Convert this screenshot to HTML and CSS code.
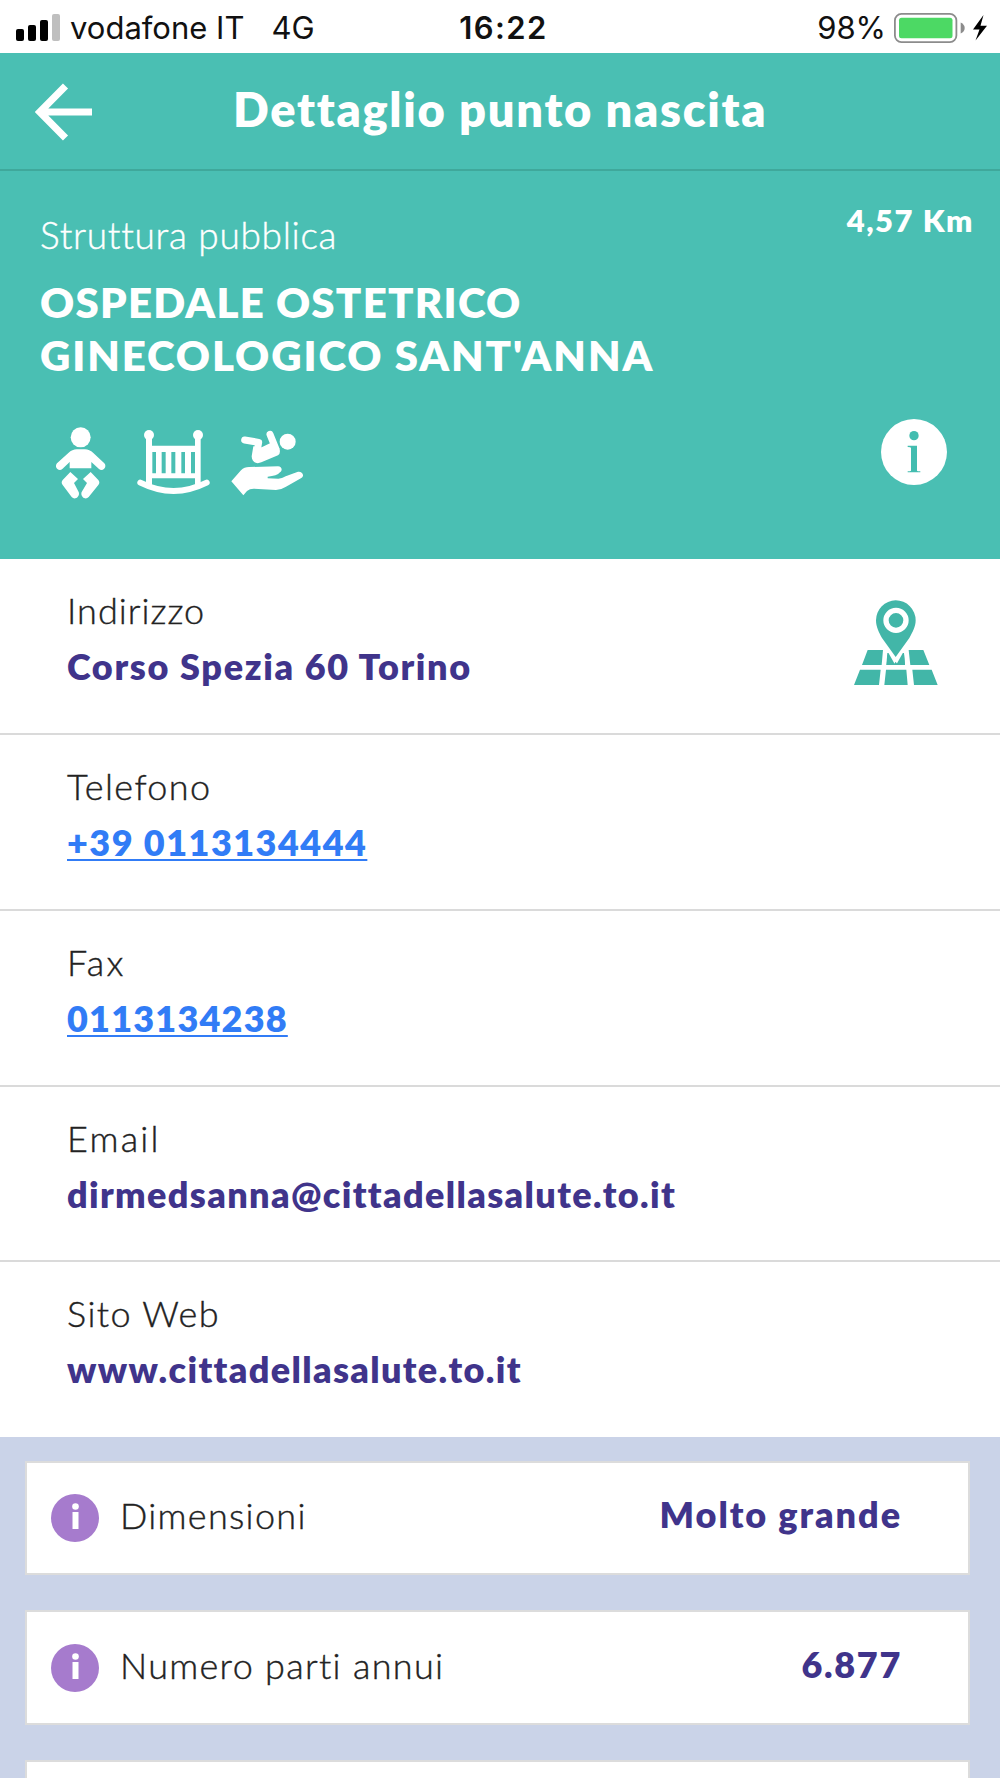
FILE: index.html
```
<!DOCTYPE html>
<html lang="it">
<head>
<meta charset="utf-8">
<title>Dettaglio punto nascita</title>
<link rel="stylesheet" href="styles.css">
</head>
<body>
<div class="screen">
  <div class="status">
    <div class="status-left">
      <svg class="signal" width="44" height="27" viewBox="0 0 44 27">
        <rect x="0" y="15" width="8" height="12" rx="2"/>
        <rect x="12" y="11" width="8" height="16" rx="2"/>
        <rect x="24" y="6" width="8" height="21" rx="2"/>
        <rect x="36" y="0" width="8" height="27" rx="2" fill="#bfbfbf"/>
      </svg>
      <span>vodafone IT</span>
      <span class="network">4G</span>
    </div>
    <div class="clock">16:22</div>
    <div class="status-right">
      <span>98%</span>
      <svg class="battery" width="94" height="30" viewBox="0 0 94 30">
        <rect x=".9" y=".9" width="61.5" height="28.2" rx="6.5" fill="#fff" stroke="#8c8c8c" stroke-width="1.8"/>
        <rect x="5" y="4.7" width="53.5" height="20.6" rx="2.5" fill="#4cd964"/>
        <path d="M66.7 9.500q4 2 4 5.500t-4 5.500z" fill="#8c8c8c"/>
        <path d="M89.500 2 79 16.500h6.500L81.500 27.500 93 12.800h-6.500z"/>
      </svg>
    </div>
  </div>

  <header class="navbar">
    <svg class="back" width="58" height="58" viewBox="0 0 58 58" fill="none" stroke="#fff" stroke-width="7.200">
      <path d="M30.500 3 4.800 29l25.700 26M5 29h52"/>
    </svg>
    <h1>Dettaglio punto nascita</h1>
  </header>

  <section class="hero">
    <div class="hero-main">
      <p class="kind">Struttura pubblica</p>
      <h2><span class="line-one">OSPEDALE OSTETRICO</span><br>GINECOLOGICO SANT'ANNA</h2>
      <div class="services">
        <svg width="50" height="72" viewBox="48 50 150 216" fill="#fff">
          <circle cx="122" cy="81" r="30"/>
          <path d="M89 174v-19l-22 21c-10 9-26-5-16-17l34-31q12-11 25-11h25q13 0 25 11l33 31c10 12-6 26-16 17l-23-21v19z"/>
          <path d="M91 185l23 21-12 12 14 27c5 13-11 26-21 15L68 224q-6-8 0-15zM152 185l-23 21 12 12-16 27c-5 13 11 26 21 15l29-36q6-8 0-15z"/>
        </svg>
        <svg class="cradle" width="73" height="72" viewBox="291 50 219 216" fill="#fff">
          <circle cx="327" cy="74" r="15"/><circle cx="474" cy="74" r="15"/>
          <path d="M318 80h18v26h129V80h17v145h-17v-21H336v21h-18z"/>
          <path d="M337 125h11v64h-11zM365 125h12v64h-12zM394 125h12v64h-12zM424 125h11v64h-11zM453 125h12v64h-12z" fill="#4abfb3"/>
          <path d="M301 217q100 50 199 0" fill="none" stroke="#fff" stroke-width="18" stroke-linecap="round"/>
        </svg>
        <svg class="newborn" width="72" height="72" viewBox="573 50 216 216" fill="#fff">
          <circle cx="743" cy="94" r="24"/>
          <path d="M614 89l42 7-5 28M690 72l17 42" fill="none" stroke="#fff" stroke-width="21" stroke-linecap="round" stroke-linejoin="round"/>
          <path d="M640 108l25 3 28-14 25 16q5 16-4 22l-50 21c-16 7-29-2-29-18z"/>
          <path d="M574 213l29-33q10-10 24-10l87-2c11 0 15 12 6 18q-9 11-37 13v5l32 1q11 0 22-7l35-13c15-4 23 12 12 18l-46 26q-14 9-30 10l-67-4q-12 0-20 7l-11 13z"/>
        </svg>
      </div>
    </div>
    <div class="hero-side">
      <span class="distance">4,57 Km</span>
      <svg class="info" width="66" height="66" viewBox="123 56 198 198" fill="#fff">
        <circle cx="222" cy="155" r="99"/>
        <g fill="#43bdb0"><circle cx="222" cy="106" r="14"/><path d="M203 136h28v75q1 2 10 2v3h-38v-3q9 0 10-2v-67q0-4-10-4z"/></g>
      </svg>
    </div>
  </section>

  <section class="contacts">
    <div class="row">
      <div><p class="label ind">Indirizzo</p><p class="value corso">Corso Spezia 60 Torino</p></div>
      <svg class="map" width="86" height="86" viewBox="70 59 256 258" fill="#42b6a8">
        <path d="M113 209h46l-4 45H96zM236 209h44l18 45h-57zM90 268h62l-5 46H72zM168 268h61l4 46h-70zM247 268h58l18 46h-71z"/>
        <path d="M172 218h50l3 36h-56z"/>
        <path d="M160 190l37 66 37-66z" fill="#fff"/>
        <path d="M173 222l19 32h-22zM222 222l-19 32h22zM190 254l7-10 7 10z"/>
        <path d="M197 60a60 60 0 0 1 60 60c0 20-10 37-19 53l-41 57-41-57c-9-16-18-33-18-53a60 60 0 0 1 59-60z"/>
        <circle cx="198" cy="120" r="30" fill="none" stroke="#fff" stroke-width="16"/>
      </svg>
    </div>
    <div class="row"><div><p class="label">Telefono</p><p class="value"><a class="phone" href="#">+39 0113134444</a></p></div></div>
    <div class="row"><div><p class="label fax">Fax</p><p class="value"><a class="faxno" href="#">0113134238</a></p></div></div>
    <div class="row"><div><p class="label email">Email</p><p class="value mail">dirmedsanna@cittadellasalute.to.it</p></div></div>
    <div class="row"><div><p class="label site">Sito Web</p><p class="value mail">www.cittadellasalute.to.it</p></div></div>
  </section>

  <section class="stats">
    <div class="card">
      <svg width="48" height="48" viewBox="0 0 48 48"><circle cx="24" cy="24" r="24" fill="#a67bcd"/><g fill="#fff"><circle cx="24.500" cy="12.500" r="3.300"/><path d="M21.500 18h6v17h-6z"/></g></svg>
      <span class="name">Dimensioni</span><span class="figure">Molto grande</span>
    </div>
    <div class="card">
      <svg width="48" height="48" viewBox="0 0 48 48"><circle cx="24" cy="24" r="24" fill="#a67bcd"/><g fill="#fff"><circle cx="24.500" cy="12.500" r="3.300"/><path d="M21.500 18h6v17h-6z"/></g></svg>
      <span class="name">Numero parti annui</span><span class="figure num">6.877</span>
    </div>
    <div class="card"></div>
  </section>
</div>
</body>
</html>
```
FILE: styles.css
```
* { box-sizing: border-box; }
body, h1, h2, p { margin: 0; }
body { background: #fff; font-family: Lato, "Open Sans", sans-serif; font-variant-ligatures: none; }
svg { display: block; flex: none; }
.screen { width: 1000px; height: 1778px; overflow: hidden; }

.status {
  height: 53.400px; padding: 2px 12px 0 16px;
  display: grid; grid-template-columns: 1fr auto 1fr; align-items: center;
  font: 400 31px/51px Inter, sans-serif; color: #111;
}
.status-left, .status-right { display: flex; align-items: center; }
.status-right { justify-content: flex-end; }
.signal { margin-right: 10px; }
.network { margin-left: 27px; }
.clock { font-weight: 600; letter-spacing: 1.400px; padding-left: 3px; }
.battery { margin-left: 8px; }

.navbar {
  height: 117.600px; padding-left: 35px; border-bottom: 2px solid #3fa89b; background: #4abfb3;
  display: flex; align-items: center;
}
.back { margin-top: 1px; }
h1 { margin-left: 140px; padding-bottom: 5px; font-size: 47px; font-weight: 800; line-height: 56px; letter-spacing: 1.700px; color: #fff; white-space: nowrap; }

.hero { height: 388.300px; padding: 0 28px 0 40px; display: flex; justify-content: space-between; background: #4abfb3; color: #fff; }
.hero-main { padding-top: 42px; }
.kind { font-size: 37px; font-weight: 300; line-height: 44px; letter-spacing: .7px; -webkit-text-stroke: .4px #fff; }
h2 { margin-top: 19px; font-size: 42px; font-weight: 800; line-height: 53.500px; letter-spacing: 1.900px; }
.line-one { letter-spacing: 1.230px; }
.services { display: flex; margin: 44px 0 0 16px; }
.cradle { margin-left: 31px; }
.newborn { margin-left: 21px; }
.hero-side { padding-top: 30px; display: flex; flex-direction: column; align-items: flex-end; }
.distance { font-size: 31px; font-weight: 800; line-height: 38px; letter-spacing: 1.500px; margin-right: -2px; }
.info { margin: 180px 25px 0 0; }

.row { height: 175.800px; padding: 29px 61px 0 67px; display: flex; justify-content: space-between; border-bottom: 2px solid #dadada; }
.row:last-child { height: 174.600px; border-bottom: 0; }
.label, .name { font-size: 36px; font-weight: 300; line-height: 44px; letter-spacing: 1.400px; color: #222; -webkit-text-stroke: .4px #222; }
.label.ind { letter-spacing: 1px; }
.label.fax, .label.email { letter-spacing: 2.200px; }
.value, .figure { font-size: 36px; font-weight: 800; line-height: 44px; color: #40348b; letter-spacing: 1.350px; }
.value { margin-top: 12px; }
.value.corso { letter-spacing: 1.650px; }
.value a { color: #317cf6; text-decoration-thickness: 2px; text-underline-offset: 3px; letter-spacing: 1.470px; text-decoration-skip-ink: none; }
.value .faxno { letter-spacing: 1.200px; }
.map { margin-top: 12px; }

.stats { height: 341px; padding: 24px 30px 0 25px; background: #cad3e8; display: flex; flex-direction: column; gap: 35px; }
.card { flex: none; height: 114.300px; padding: 0 66px 0 24px; display: flex; align-items: center; background: #fff; border: 2px solid #dcdcdc; }
.name { margin-left: 21px; padding-bottom: 6px; letter-spacing: 1.300px; }
.figure { margin-left: auto; padding-bottom: 8px; letter-spacing: 1.930px; }
.num { letter-spacing: 1.690px; }
```
